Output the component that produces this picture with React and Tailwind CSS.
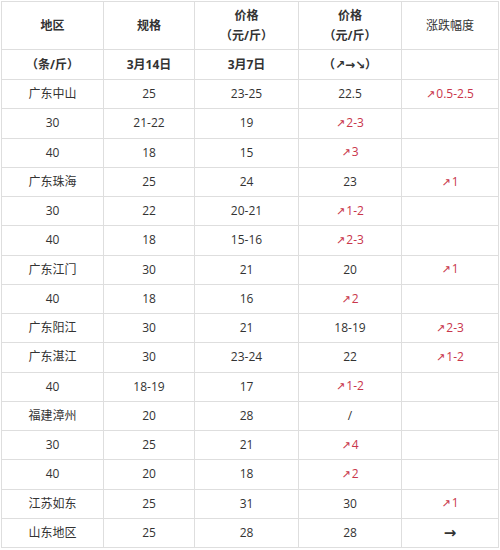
const rows = [
  ["广东中山", "25", "23-25", "22.5", "↗0.5-2.5"],
  ["30", "21-22", "19", "↗2-3", ""],
  ["40", "18", "15", "↗3", ""],
  ["广东珠海", "25", "24", "23", "↗1"],
  ["30", "22", "20-21", "↗1-2", ""],
  ["40", "18", "15-16", "↗2-3", ""],
  ["广东江门", "30", "21", "20", "↗1"],
  ["40", "18", "16", "↗2", ""],
  ["广东阳江", "30", "21", "18-19", "↗2-3"],
  ["广东湛江", "30", "23-24", "22", "↗1-2"],
  ["40", "18-19", "17", "↗1-2", ""],
  ["福建漳州", "20", "28", "/", ""],
  ["30", "25", "21", "↗4", ""],
  ["40", "20", "18", "↗2", ""],
  ["江苏如东", "25", "31", "30", "↗1"],
  ["山东地区", "25", "28", "28", "→"],
];

const Cell = ({ value }) => {
  if (value.startsWith("↗")) {
    return (
      <span className="text-[#c9364b]">
        <span className="text-[11px] mr-px font-['DejaVu_Sans',sans-serif]">↗</span>
        {value.slice(1)}
      </span>
    );
  }
  if (value === "→") {
    return <span className="text-[15px] font-bold font-['DejaVu_Sans',sans-serif]">→</span>;
  }
  return <span>{value}</span>;
};

const td = "border border-[#dedede] text-center align-middle p-0";

export default function App() {
  return (
    <div className="w-[500px] h-[550px] bg-white pt-px pl-px font-['Open_Sans','Noto_Sans_CJK_SC',sans-serif] text-[12px] text-[#333]">
      <table className="border-collapse table-fixed w-[497px]">
        <colgroup>
          <col className="w-[102px]" />
          <col className="w-[91px]" />
          <col className="w-[104px]" />
          <col className="w-[103px]" />
          <col className="w-[97px]" />
        </colgroup>
        <tbody>
          <tr className="h-[48px]">
            <td className={`${td} font-bold`}>地区</td>
            <td className={`${td} font-bold`}>规格</td>
            <td className={`${td} font-bold leading-[20px]`}>
              价格
              <br />
              （元/斤）
            </td>
            <td className={`${td} font-bold leading-[20px]`}>
              价格
              <br />
              （元/斤）
            </td>
            <td className={td}>涨跌幅度</td>
          </tr>
          <tr className="h-[30px]">
            <td className={`${td} font-bold`}>（条/斤）</td>
            <td className={`${td} font-bold`}>3月14日</td>
            <td className={`${td} font-bold`}>3月7日</td>
            <td className={`${td} font-bold`}>
              （<span className="text-[12px] font-['DejaVu_Sans',sans-serif]">↗→↘</span>）
            </td>
            <td className={td}></td>
          </tr>
          {rows.map((row, i) => (
            <tr key={i} className="h-[29.25px]">
              {row.map((v, j) => (
                <td key={j} className={td}>
                  <Cell value={v} />
                </td>
              ))}
            </tr>
          ))}
        </tbody>
      </table>
    </div>
  );
}
